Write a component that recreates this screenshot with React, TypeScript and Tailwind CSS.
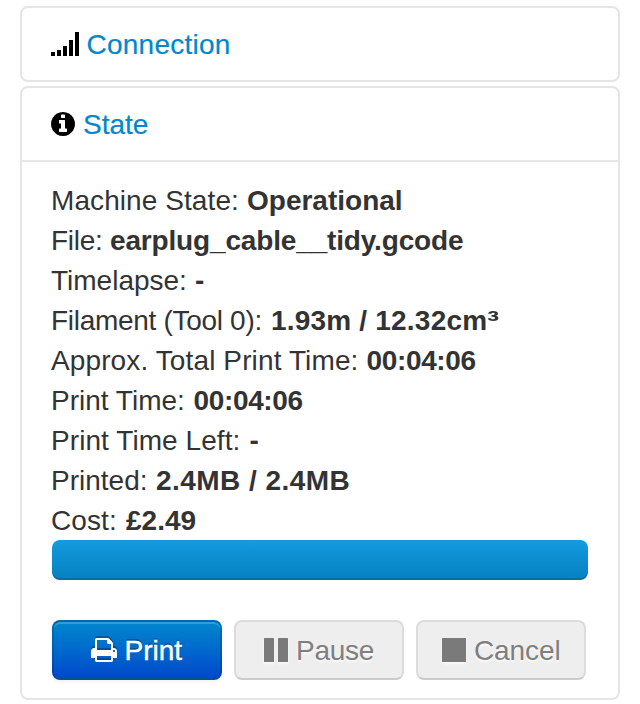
import type { ReactNode } from "react";

type Row = { label: string; value: ReactNode; labelClass: string; valueClass: string };

const rows: Row[] = [
  { label: "Machine State:", value: "Operational", labelClass: "w-[196px] tracking-[0.08px]", valueClass: "" },
  { label: "File:", value: "earplug_cable__tidy.gcode", labelClass: "w-[59px] tracking-[-0.3px]", valueClass: "tracking-[-0.16px]" },
  { label: "Timelapse:", value: "-", labelClass: "w-[144px]", valueClass: "" },
  {
    label: "Filament (Tool 0):",
    value: (
      <>
        1.93m / 12.32cm<span className="inline-block origin-left scale-x-[1.3]">³</span>
      </>
    ),
    labelClass: "w-[220px] tracking-[-0.3px]",
    valueClass: "tracking-[0.2px]",
  },
  { label: "Approx. Total Print Time:", value: "00:04:06", labelClass: "w-[315.500px] tracking-[0.12px]", valueClass: "tracking-[-0.35px]" },
  { label: "Print Time:", value: "00:04:06", labelClass: "w-[142.500px]", valueClass: "tracking-[-0.35px]" },
  { label: "Print Time Left:", value: "-", labelClass: "w-[198.500px] tracking-[0.07px]", valueClass: "" },
  { label: "Printed:", value: "2.4MB / 2.4MB", labelClass: "w-[105px]", valueClass: "tracking-[0.46px]" },
  { label: "Cost:", value: "£2.49", labelClass: "w-[75px] tracking-[0.1px]", valueClass: "" },
];

function SignalIcon() {
  return (
    <svg className="h-6 w-7 shrink-0" viewBox="0 0 28 24" fill="#000">
      <path d="M0 20h4v4H0zM6 18h4v6H6zM12 14h4v10h-4zM18 8h4v16h-4zM24 0h4v24h-4z" />
    </svg>
  );
}

function InfoIcon() {
  return (
    <svg className="h-6 w-6 shrink-0" viewBox="0 128 1536 1536" fill="#000">
      <path d="M1024 1376v-160q0-14-9-23t-23-9h-96v-512q0-14-9-23t-23-9h-320q-14 0-23 9t-9 23v160q0 14 9 23t23 9h96v320h-96q-14 0-23 9t-9 23v160q0 14 9 23t23 9h448q14 0 23-9t9-23zm-128-896v-160q0-14-9-23t-23-9h-192q-14 0-23 9t-9 23v160q0 14 9 23t23 9h192q14 0 23-9t9-23zm640 416q0 209-103 385.5t-279.5 279.5-385.5 103-385.5-103-279.5-279.5-103-385.5 103-385.5 279.5-279.5 385.5-103 385.5 103 279.5 279.5 103 385.5z" />
    </svg>
  );
}

function PrintIcon() {
  return (
    <svg className="h-6 w-[26px] shrink-0 drop-shadow-[0_-2px_0_rgba(0,0,0,0.25)]" viewBox="0 128 1664 1536" fill="#fff">
      <path d="M384 1536h896v-256h-896v256zm0-640h896v-384h-160q-40 0-68-28t-28-68v-160h-640v640zm1152 64q0-26-19-45t-45-19-45 19-19 45 19 45 45 19 45-19 19-45zm128 0v416q0 13-9.500 22.500t-22.500 9.500h-224v160q0 40-28 68t-68 28h-960q-40 0-68-28t-28-68v-160h-224q-13 0-22.500-9.500t-9.500-22.500v-416q0-79 56.500-135.500t135.500-56.500h64v-544q0-40 28-68t68-28h672q40 0 88 20t76 48l152 152q28 28 48 76t20 88v256h64q79 0 135.500 56.500t56.500 135.500z" />
    </svg>
  );
}

function PauseIcon() {
  return (
    <svg className="h-6 w-6 shrink-0 drop-shadow-[0_2px_1px_rgba(255,255,255,0.75)]" viewBox="0 0 24 24" fill="#7a7a7a">
      <rect width="10" height="24" rx="0.5" />
      <rect x="14" width="10" height="24" rx="0.5" />
    </svg>
  );
}

function StopIcon() {
  return (
    <svg className="h-6 w-6 shrink-0 drop-shadow-[0_2px_1px_rgba(255,255,255,0.75)]" viewBox="0 0 24 24" fill="#7a7a7a">
      <rect width="24" height="24" rx="0.5" />
    </svg>
  );
}

function Heading({ icon, children }: { icon: ReactNode; children: ReactNode }) {
  return (
    <div className="flex h-[72px] items-center pl-[29px] text-[#0088cc]">
      {icon}
      {children}
    </div>
  );
}

export default function App() {
  return (
    <div className="h-[704px] w-[640px] bg-white px-5 pt-1.5 font-['Liberation_Sans',Arial,sans-serif] text-[28px] leading-10 text-[#333]">
      <section className="mb-1 rounded-lg border-2 border-[#e5e5e5]">
        <Heading icon={<SignalIcon />}>
          <a className="ml-[7.500px] pt-0.5 tracking-[0.25px] [-webkit-text-stroke:0.2px_#0088cc]">Connection</a>
        </Heading>
      </section>
      <section className="h-[614px] rounded-lg border-2 border-[#e5e5e5]">
        <Heading icon={<InfoIcon />}>
          <a className="ml-2 pt-0.5 [-webkit-text-stroke:0.2px_#0088cc]">State</a>
        </Heading>
        <div className="border-t-2 border-[#e5e5e5] pt-[18px]">
          <div className="-mb-px pt-px pl-[29px]">
            {rows.map((row) => (
              <div key={row.label} className="flex h-10 whitespace-nowrap">
                <span className={`shrink-0 ${row.labelClass}`}>{row.label}</span>
                <strong className={`font-bold ${row.valueClass}`}>{row.value}</strong>
              </div>
            ))}
          </div>
          <div className="ml-[30px] h-10 w-[536px] rounded-lg bg-linear-to-b from-[#149bdf] to-[#0480be] shadow-[inset_0_-2px_0_rgba(0,0,0,0.15)]" />
          <div className="mt-10 ml-[30px] flex gap-3">
            <button className="flex h-[60px] w-[170px] items-center rounded-lg border-2 border-t-[#0068b2] border-r-[rgba(0,0,0,0.15)] border-b-[#00509a] border-l-[rgba(0,0,0,0.15)] bg-linear-to-b from-[#0088cc] to-[#0044cc] bg-origin-border pl-[36.500px] text-white shadow-[inset_0_2px_0_rgba(255,255,255,0.2),0_2px_4px_rgba(0,0,0,0.05)] text-shadow-[0_-2px_0_rgba(0,0,0,0.25)]">
              <PrintIcon />
              <span className="ml-2 pt-0.5 [-webkit-text-stroke:0.4px_white]">Print</span>
            </button>
            <button className="flex h-[60px] w-[170px] items-center rounded-lg border-2 border-[#dcdcdc] border-b-[#cbcbcb] bg-[#eeeeee] pl-[28px] text-[#7f7f7f] text-shadow-[0_2px_2px_rgba(255,255,255,0.75)]">
              <PauseIcon />
              <span className="ml-2 pt-0.5 tracking-[-0.25px]">Pause</span>
            </button>
            <button className="flex h-[60px] w-[170px] items-center rounded-lg border-2 border-[#dcdcdc] border-b-[#cbcbcb] bg-[#eeeeee] pl-[24px] text-[#7f7f7f] text-shadow-[0_2px_2px_rgba(255,255,255,0.75)]">
              <StopIcon />
              <span className="ml-2 pt-0.5 tracking-[-0.1px]">Cancel</span>
            </button>
          </div>
        </div>
      </section>
    </div>
  );
}
